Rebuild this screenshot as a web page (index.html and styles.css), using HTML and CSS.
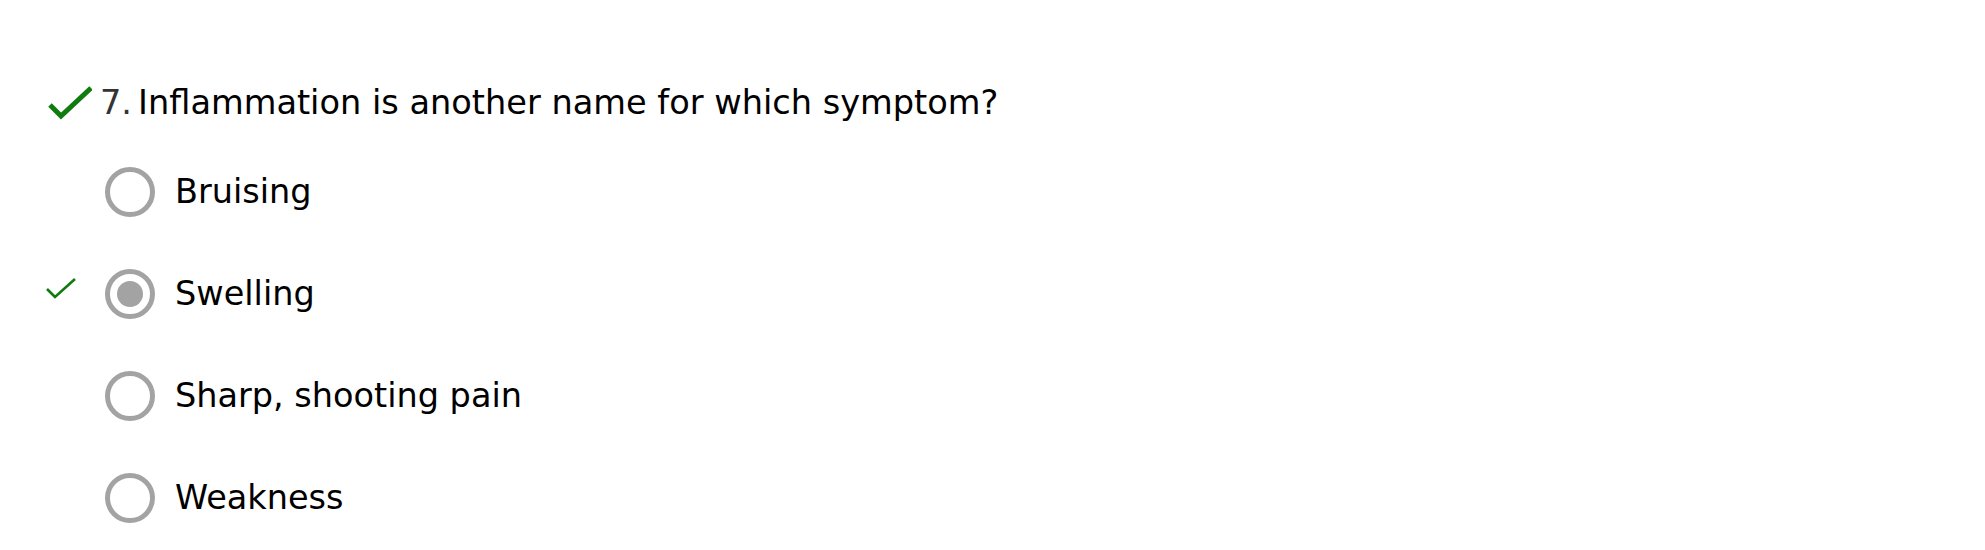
FILE: index.html
```html
<!DOCTYPE html>
<html lang="en">
<head>
<meta charset="utf-8">
<title>Quiz</title>
<link rel="stylesheet" href="styles.css">
</head>
<body>
<main class="quiz">
  <section class="question">
    <h2 class="q-title">
      <svg class="q-check" width="46" height="34" viewBox="0 0 46 34" aria-hidden="true"><polyline points="4,19 15,30 45,2" fill="none" stroke="#107c10" stroke-width="5"/></svg>
      <span class="q-num">7.</span>
      <span class="q-text">Inflammation is another name for which symptom?</span>
    </h2>
    <ul class="options">
      <li class="option"><span class="mark"></span><span class="radio"></span><span class="label">Bruising</span></li>
      <li class="option"><span class="mark"><svg width="30" height="24" viewBox="0 0 30 24" aria-hidden="true"><polyline points="1,13 9,21 29,3" fill="none" stroke="#107c10" stroke-width="2.6"/></svg></span><span class="radio checked"></span><span class="label">Swelling</span></li>
      <li class="option"><span class="mark"></span><span class="radio"></span><span class="label">Sharp, shooting pain</span></li>
      <li class="option"><span class="mark"></span><span class="radio"></span><span class="label">Weakness</span></li>
    </ul>
  </section>
  <section class="question">
    <h2 class="q-title">
      <span class="q-icon-space"></span>
      <span class="q-num">8.</span>
      <span class="q-text">Which of the following should be checked first?</span>
    </h2>
  </section>
</main>
</body>
</html>
```
FILE: styles.css
```css
html, body {
  margin: 0;
  padding: 0;
  background: #ffffff;
}
body {
  font-family: "DejaVu Sans", Verdana, sans-serif;
  color: #000000;
}
.quiz {
  padding: 83px 0 0 46px;
}
.question {
  margin-bottom: 17px;
}
.q-title {
  display: flex;
  align-items: center;
  margin: 0;
  font-size: 33.6px;
  font-weight: normal;
  line-height: 40px;
}
.q-check, .q-icon-space {
  width: 46px;
  height: 34px;
  flex: none;
  margin-right: 8px;
}
.q-num {
  color: #333333;
  margin-right: 6px;
}
.options {
  list-style: none;
  margin: 38px 0 0 0;
  padding: 0;
  display: flex;
  flex-direction: column;
  gap: 40px;
}
.option {
  display: flex;
  align-items: center;
  height: 62px;
}
.mark {
  width: 59px;
  flex: none;
  display: flex;
  align-items: center;
  height: 24px;
  margin-top: -12px;
}
.radio {
  width: 50px;
  height: 50px;
  box-sizing: border-box;
  border: 5px solid #a3a3a3;
  border-radius: 50%;
  flex: none;
  display: flex;
  align-items: center;
  justify-content: center;
}
.radio.checked::after {
  content: "";
  width: 26px;
  height: 26px;
  border-radius: 50%;
  background: #a3a3a3;
}
.label {
  margin-left: 20px;
  font-size: 33.5px;
  line-height: 40px;
}
```
